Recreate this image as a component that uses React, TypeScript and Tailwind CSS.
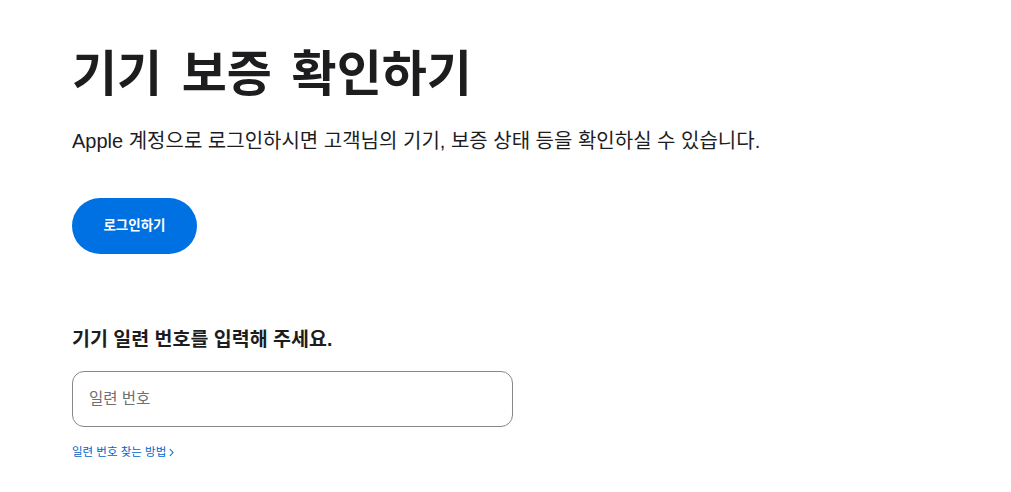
import React from "react";

export default function App() {
  return (
    <div className="min-h-[492px] w-full bg-white" style={{ fontFamily: '"Liberation Sans", "Noto Sans CJK KR", sans-serif' }}>
      <div className="pl-[72px] pt-[40px]">
        <h1 className="text-[49px] leading-[68px] font-bold text-[#1d1d1f]" style={{ wordSpacing: "6px" }}>
          기기 보증 확인하기
        </h1>
        <p className="mt-[19px] text-[20px] leading-[28px] text-[#1d1d1f]">
          Apple 계정으로 로그인하시면 고객님의 기기, 보증 상태 등을 확인하실 수 있습니다.
        </p>
        <button className="mt-[43px] h-[56px] w-[125px] rounded-full bg-[#0071e3] text-white text-[13.5px] font-bold">
          로그인하기
        </button>
        <h2 className="mt-[73px] text-[19.5px] leading-[24px] font-bold text-[#1d1d1f]">
          기기 일련 번호를 입력해 주세요.
        </h2>
        <div className="mt-[20px] flex h-[56px] w-[441px] items-center rounded-[12px] border border-[#86868b] px-[16px]">
          <span className="text-[15.5px] text-[#6e6e73]">일련 번호</span>
        </div>
        <a className="mt-[17px] inline-flex items-center gap-[3px] text-[11.5px] text-[#0066cc]">
          일련 번호 찾는 방법
          <svg width="5" height="9" viewBox="0 0 5 9" fill="none">
            <path d="M0.8 1l3.2 3.5L0.8 8" stroke="#0066cc" strokeWidth="1.1" />
          </svg>
        </a>
      </div>
    </div>
  );
}
